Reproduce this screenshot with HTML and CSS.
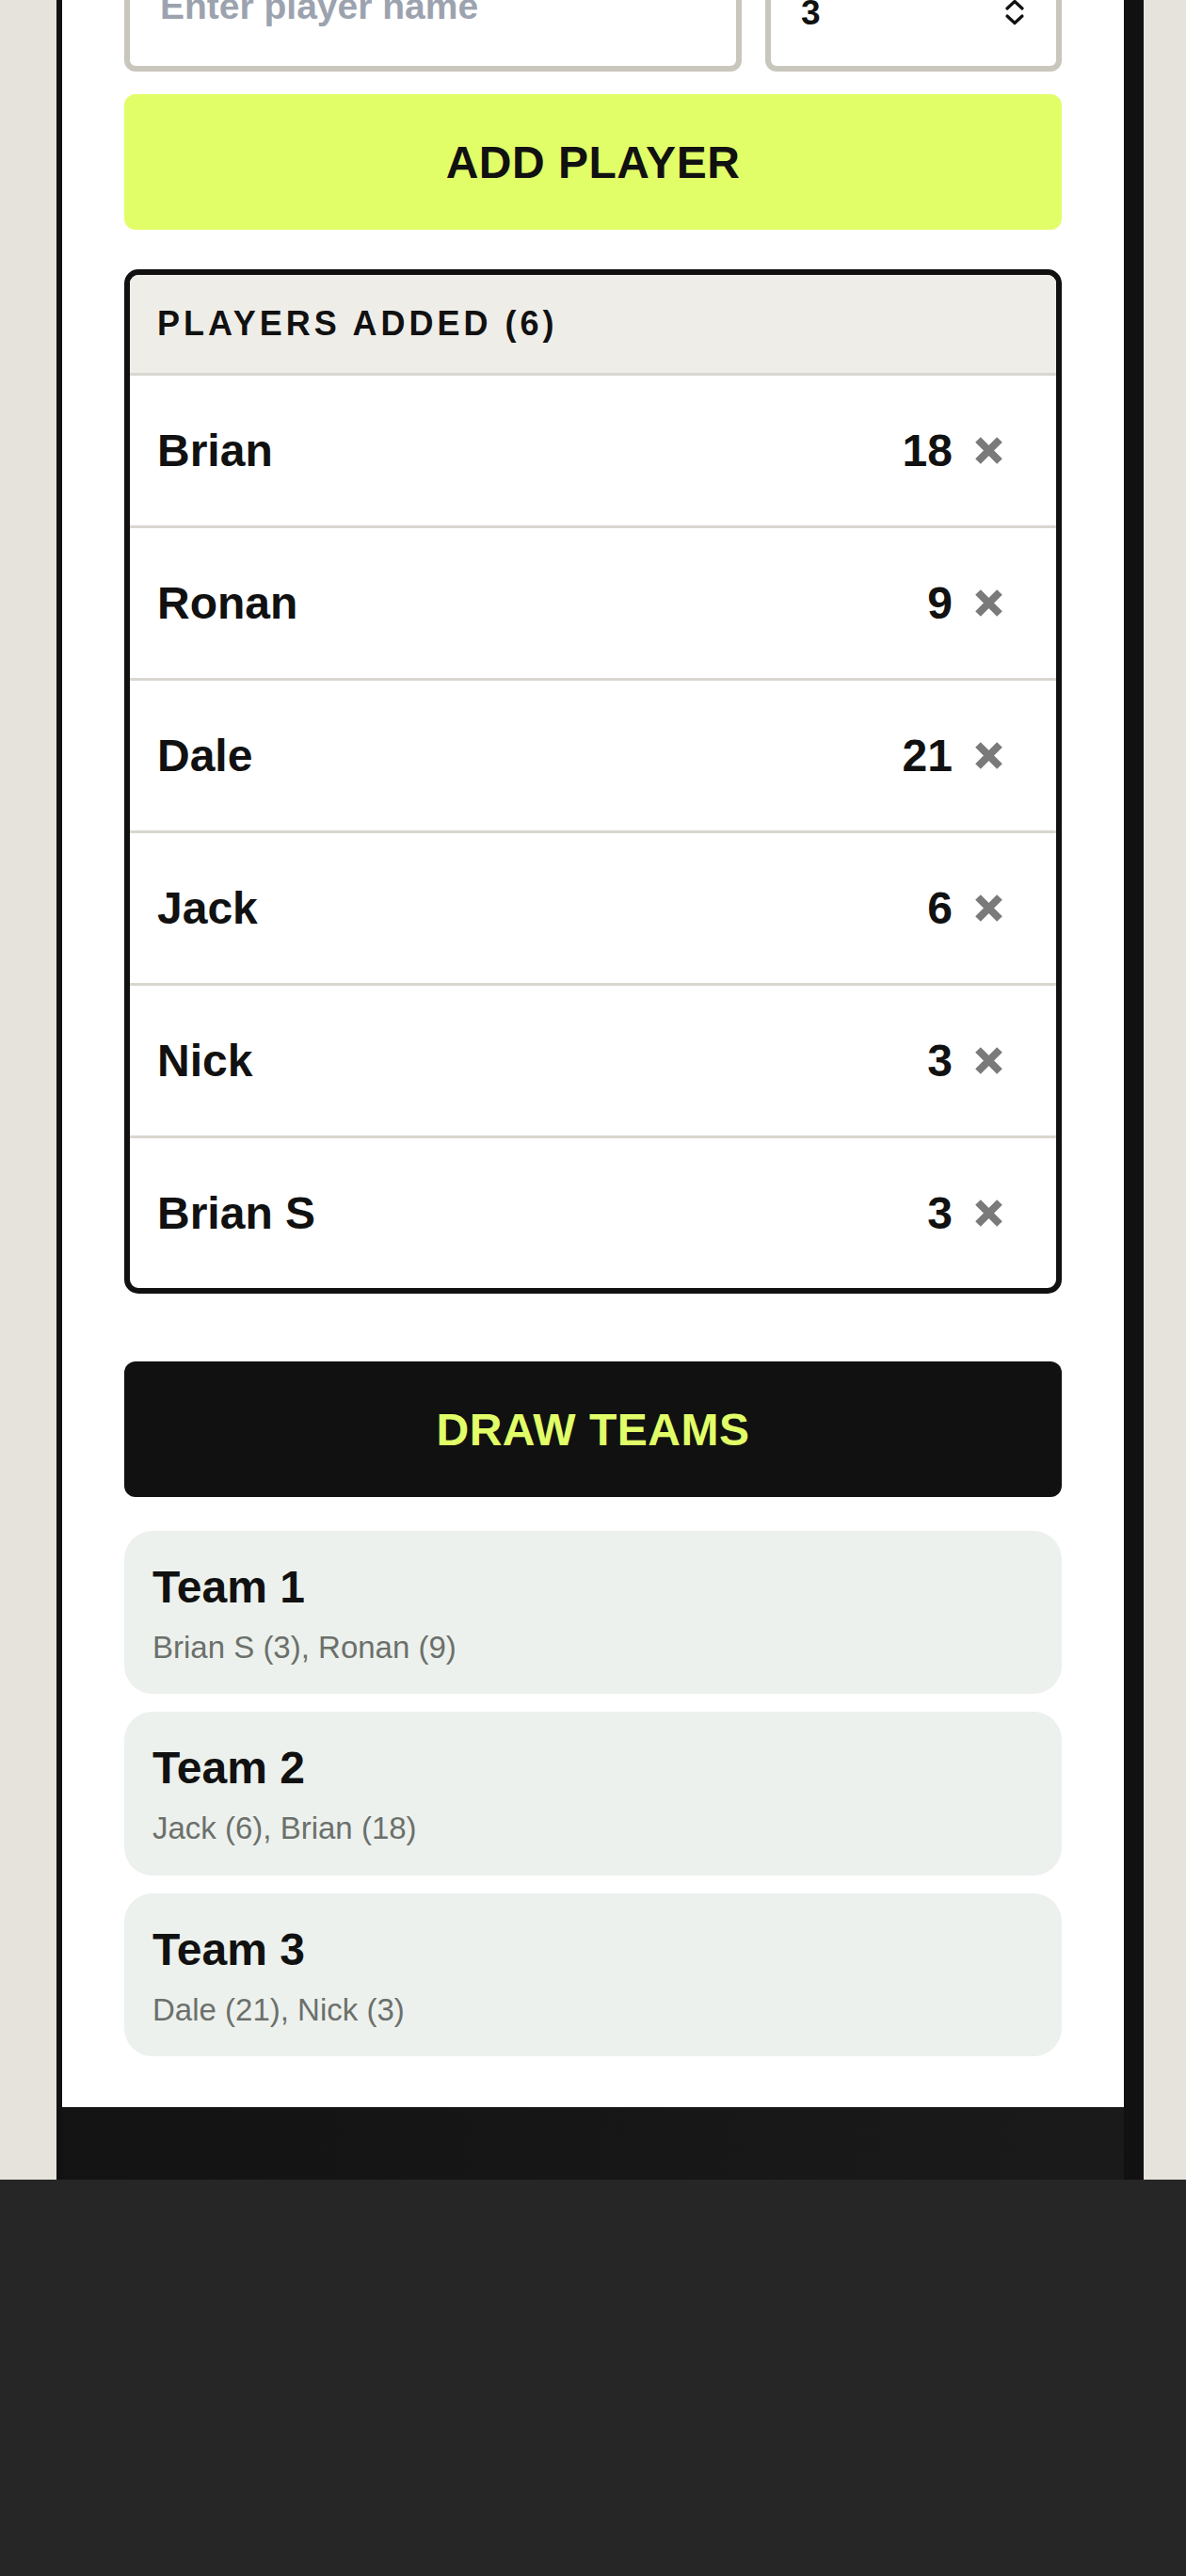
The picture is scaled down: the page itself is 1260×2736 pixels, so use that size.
FILE: index.html
```html
<!DOCTYPE html>
<html lang="en">
<head>
    <meta charset="UTF-8">
    <meta name="viewport" content="width=device-width, initial-scale=1.0">
    <title>Team Picker</title>
    <link rel="stylesheet" href="styles.css">
</head>
<body>

<div class="phone">
    <div class="screen">
        <form class="entry">
            <input type="text" class="field" id="playerName" placeholder="Enter player name">
            <div class="count">
                <select class="field field-select" id="teamCount">
                    <option>2</option>
                    <option selected>3</option>
                    <option>4</option>
                </select>
                <svg class="count-arrows" viewBox="0 0 22 28" width="22" height="28">
                    <path d="M3 10 L11 2.5 L19 10"/>
                    <path d="M3 18 L11 25.5 L19 18"/>
                </svg>
            </div>
        </form>

        <button class="btn btn-add" type="button">ADD PLAYER</button>

        <section class="roster">
            <div class="roster-head">Players added (6)</div>
            <ul class="roster-list">
                <li class="player">
                    <span class="player-name">Brian</span>
                    <span class="player-score">18</span>
                    <button class="remove" type="button" aria-label="Remove Brian">
                        <svg viewBox="0 0 29 29" width="29" height="29"><path d="M3 3 L26 26 M26 3 L3 26"/></svg>
                    </button>
                </li>
                <li class="player">
                    <span class="player-name">Ronan</span>
                    <span class="player-score">9</span>
                    <button class="remove" type="button" aria-label="Remove Ronan">
                        <svg viewBox="0 0 29 29" width="29" height="29"><path d="M3 3 L26 26 M26 3 L3 26"/></svg>
                    </button>
                </li>
                <li class="player">
                    <span class="player-name">Dale</span>
                    <span class="player-score">21</span>
                    <button class="remove" type="button" aria-label="Remove Dale">
                        <svg viewBox="0 0 29 29" width="29" height="29"><path d="M3 3 L26 26 M26 3 L3 26"/></svg>
                    </button>
                </li>
                <li class="player">
                    <span class="player-name">Jack</span>
                    <span class="player-score">6</span>
                    <button class="remove" type="button" aria-label="Remove Jack">
                        <svg viewBox="0 0 29 29" width="29" height="29"><path d="M3 3 L26 26 M26 3 L3 26"/></svg>
                    </button>
                </li>
                <li class="player">
                    <span class="player-name">Nick</span>
                    <span class="player-score">3</span>
                    <button class="remove" type="button" aria-label="Remove Nick">
                        <svg viewBox="0 0 29 29" width="29" height="29"><path d="M3 3 L26 26 M26 3 L3 26"/></svg>
                    </button>
                </li>
                <li class="player">
                    <span class="player-name">Brian S</span>
                    <span class="player-score">3</span>
                    <button class="remove" type="button" aria-label="Remove Brian S">
                        <svg viewBox="0 0 29 29" width="29" height="29"><path d="M3 3 L26 26 M26 3 L3 26"/></svg>
                    </button>
                </li>
            </ul>
        </section>

        <button class="btn btn-draw" type="button">DRAW TEAMS</button>

        <div class="teams">
            <div class="team">
                <h3>Team 1</h3>
                <p>Brian S (3), Ronan (9)</p>
            </div>
            <div class="team">
                <h3>Team 2</h3>
                <p>Jack (6), Brian (18)</p>
            </div>
            <div class="team">
                <h3>Team 3</h3>
                <p>Dale (21), Nick (3)</p>
            </div>
        </div>
    </div>
    <div class="chin"></div>
</div>

</body>
</html>
```

FILE: styles.css
```css
html {
    background: #262626;
}
body {
    margin: 0;
    background: #e6e3dc;
    font-family: "Liberation Sans", Arial, sans-serif;
    color: #111;
    overflow: hidden;
}
.phone {
    width: 1128px;
    margin: -50px 0 0 60px;
    border-left: 6px solid #111;
    border-right: 21px solid #111;
    background: #fff;
}
.screen {
    padding: 0 66px 54px;
}
.chin {
    height: 77px;
    background: linear-gradient(100deg, #131313, #1a1a1a);
}

/* name + team count row */
.entry {
    display: grid;
    grid-template-columns: 656px 1fr;
    gap: 25px;
    margin: 0;
}
.field {
    box-sizing: border-box;
    width: 100%;
    height: 126px;
    margin: 0;
    padding: 0 32px 13px;
    border: 6px solid #c9c6be;
    border-radius: 12px;
    background: #fff;
    font-family: inherit;
    font-size: 39px;
    font-weight: 700;
    color: #111;
    outline: none;
}
.field::placeholder {
    color: #9ca3af;
}
.count {
    position: relative;
}
.field-select {
    -webkit-appearance: none;
    appearance: none;
    padding: 0 32px;
    font-size: 37px;
}
.count-arrows {
    position: absolute;
    right: 39px;
    top: 50%;
    transform: translateY(-50%);
    fill: none;
    stroke: #111;
    stroke-width: 3.2;
    stroke-linecap: round;
    stroke-linejoin: round;
    pointer-events: none;
}

.btn {
    display: block;
    width: 100%;
    height: 144px;
    border: none;
    border-radius: 12px;
    font-family: inherit;
    font-size: 48px;
    font-weight: 700;
    letter-spacing: 0.5px;
    cursor: pointer;
}
.btn-add {
    margin-top: 24px;
    background: #e1fe68;
    color: #111;
}
.btn-draw {
    margin-top: 72px;
    background: #111;
    color: #e1fe68;
}

/* player list */
.roster {
    margin-top: 42px;
    border: 6px solid #111;
    border-radius: 15px;
    overflow: hidden;
}
.roster-head {
    display: flex;
    align-items: center;
    height: 104px;
    padding: 0 29px;
    background: #efede8;
    border-bottom: 3px solid #d9d6cf;
    font-size: 36px;
    font-weight: 700;
    letter-spacing: 4px;
    text-transform: uppercase;
}
.roster-list {
    list-style: none;
    margin: 0;
    padding: 0;
}
.player {
    display: flex;
    align-items: center;
    height: 159px;
    padding: 0 44px 0 29px;
    border-bottom: 3px solid #d9d6cf;
    font-size: 48px;
    font-weight: 700;
}
.player:last-child {
    border-bottom: none;
}
.player-name {
    flex: 1;
}
.remove {
    display: flex;
    align-items: center;
    justify-content: center;
    width: 56px;
    height: 56px;
    margin-left: 10px;
    padding: 0;
    border: none;
    background: none;
    cursor: pointer;
}
.remove svg {
    fill: none;
    stroke: #7a7a7a;
    stroke-width: 8;
}

/* drawn teams */
.teams {
    display: flex;
    flex-direction: column;
    gap: 19px;
    margin-top: 36px;
}
.team {
    padding: 31px 30px 28px;
    border-radius: 30px;
    background: #edf1ed;
}
.team h3 {
    margin: 0 0 14px;
    font-size: 48px;
    line-height: 1.2;
}
.team p {
    margin: 0;
    font-size: 33px;
    line-height: 1.3;
    color: #6b706b;
}
```
